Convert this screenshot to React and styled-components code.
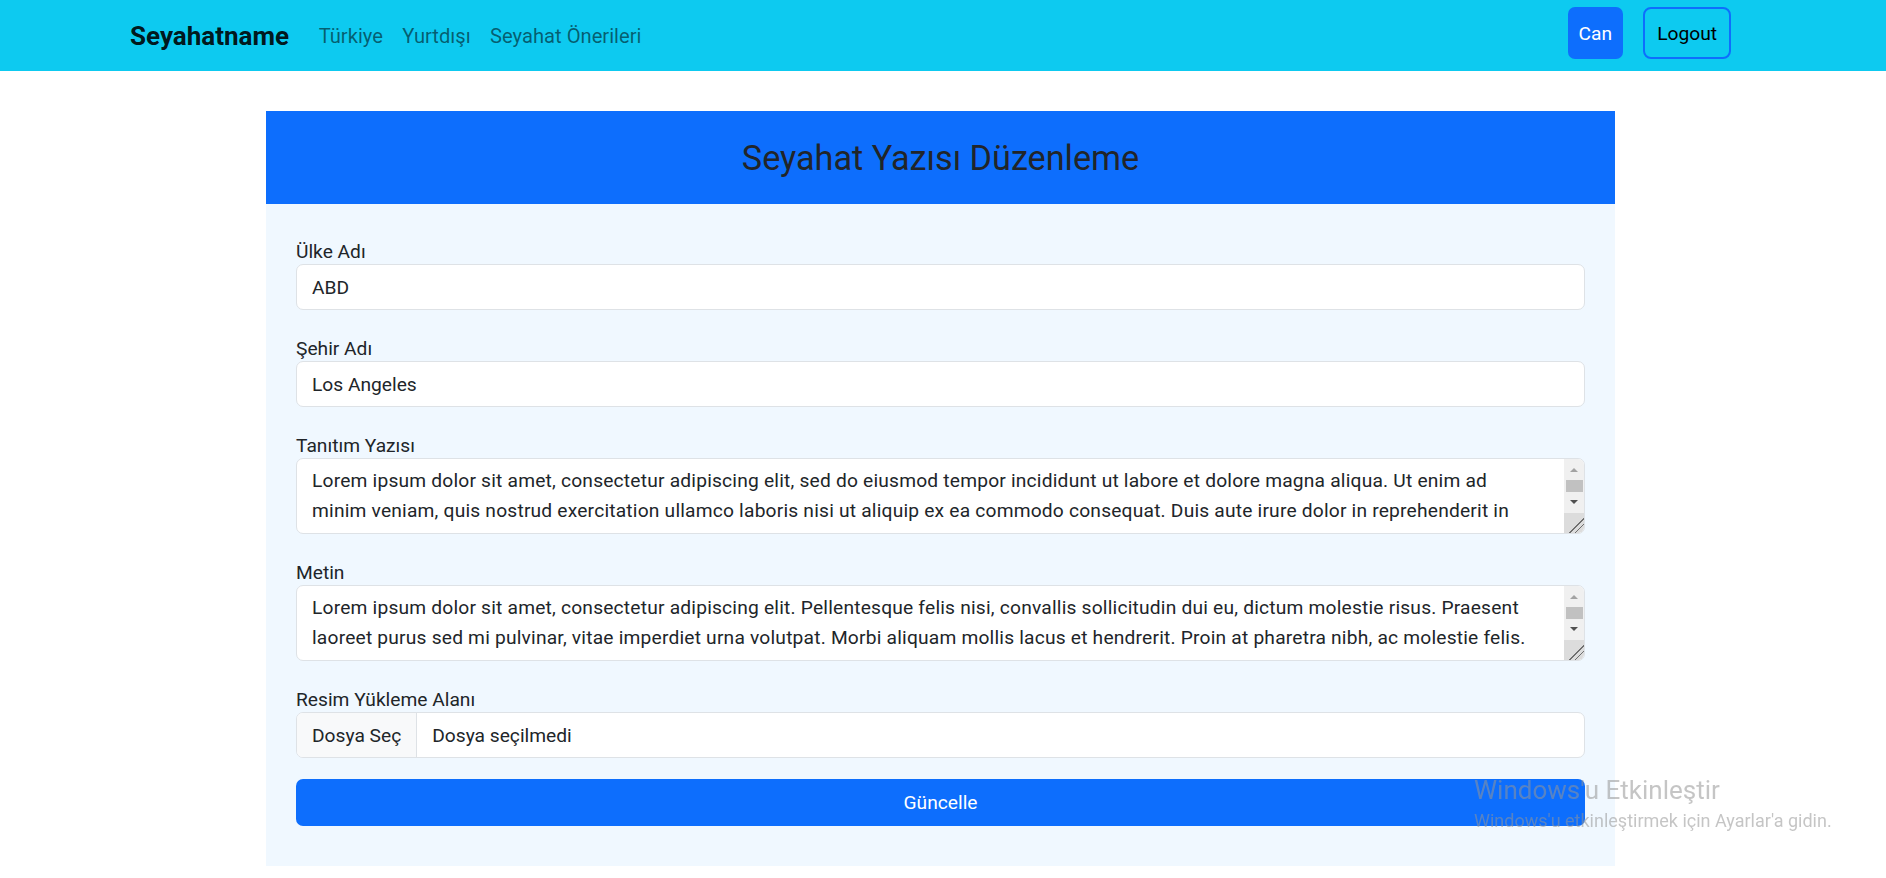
import styled, { createGlobalStyle } from "styled-components";

const GlobalStyle = createGlobalStyle`
  * {
    box-sizing: border-box;
  }
  body {
    margin: 0;
    background: #fff;
    color: #212529;
    font-family: "Segoe UI", Roboto, "Helvetica Neue", Arial, sans-serif;
  }
`;

const introText =
  "Lorem ipsum dolor sit amet, consectetur adipiscing elit, sed do eiusmod tempor incididunt ut labore et dolore magna aliqua. Ut enim ad\n" +
  "minim veniam, quis nostrud exercitation ullamco laboris nisi ut aliquip ex ea commodo consequat. Duis aute irure dolor in reprehenderit in\n" +
  "voluptate velit esse cillum dolore eu fugiat nulla pariatur. Excepteur sint occaecat cupidatat non proident, sunt in culpa qui officia.";

const bodyText =
  "Lorem ipsum dolor sit amet, consectetur adipiscing elit. Pellentesque felis nisi, convallis sollicitudin dui eu, dictum molestie risus. Praesent\n" +
  "laoreet purus sed mi pulvinar, vitae imperdiet urna volutpat. Morbi aliquam mollis lacus et hendrerit. Proin at pharetra nibh, ac molestie felis.\n" +
  "Nullam vel lectus non urna fermentum tincidunt. Donec euismod, nisl eget ultricies aliquam, nunc nisl aliquet nunc, eget aliquam nisl nunc.";

// textarea with the classic windows scrollbar drawn next to it
function ScrollTextArea({ value }) {
  return (
    <TextBox>
      <TextArea defaultValue={value} />
      <Scrollbar>
        <ScrollButton>
          <Arrow $up />
        </ScrollButton>
        <Track>
          <Thumb />
        </Track>
        <ScrollButton>
          <Arrow />
        </ScrollButton>
        <Resizer />
      </Scrollbar>
    </TextBox>
  );
}

function App() {
  return (
    <>
      <GlobalStyle />
      <Navbar>
        <NavLeft>
          <Brand>Seyahatname</Brand>
          <NavLinks>
            <NavLink>Türkiye</NavLink>
            <NavLink>Yurtdışı</NavLink>
            <NavLink>Seyahat Önerileri</NavLink>
          </NavLinks>
        </NavLeft>
        <NavActions>
          <UserButton>Can</UserButton>
          <LogoutButton>Logout</LogoutButton>
        </NavActions>
      </Navbar>

      <Card>
        <CardHeader>
          <Title>Seyahat Yazısı Düzenleme</Title>
        </CardHeader>
        <CardBody>
          <Field>
            <Label>Ülke Adı</Label>
            <Input defaultValue="ABD" />
          </Field>
          <Field>
            <Label>Şehir Adı</Label>
            <Input defaultValue="Los Angeles" />
          </Field>
          <Field>
            <Label>Tanıtım Yazısı</Label>
            <ScrollTextArea value={introText} />
          </Field>
          <Field>
            <Label>Metin</Label>
            <ScrollTextArea value={bodyText} />
          </Field>
          <Field>
            <Label>Resim Yükleme Alanı</Label>
            <FileGroup>
              <FileButton>Dosya Seç</FileButton>
              <FileName>Dosya seçilmedi</FileName>
            </FileGroup>
          </Field>
          <SubmitButton>Güncelle</SubmitButton>
        </CardBody>
      </Card>

      <Watermark>
        <WatermarkTitle>Windows'u Etkinleştir</WatermarkTitle>
        <WatermarkText>Windows'u etkinleştirmek için Ayarlar'a gidin.</WatermarkText>
      </Watermark>
    </>
  );
}

const Navbar = styled.nav`
  display: flex;
  align-items: center;
  justify-content: space-between;
  height: 71px;
  padding: 0 155px 0 130px;
  background-color: #0dcaf0;
`;
const NavLeft = styled.div`
  display: flex;
  align-items: center;
`;
const Brand = styled.a`
  font-size: 26px;
  font-weight: 700;
  color: rgba(0, 0, 0, 0.9);
  margin-right: 20px;
`;
const NavLinks = styled.div`
  display: flex;
`;
const NavLink = styled.a`
  font-size: 20.2px;
  line-height: 30px;
  padding: 0 9.6px;
  color: rgba(0, 0, 0, 0.55);
`;
const NavActions = styled.div`
  display: flex;
  gap: 20px;
  padding-bottom: 5px;
  button {
    height: 52px;
    font-family: inherit;
    font-size: 19.2px;
    cursor: pointer;
  }
`;
const UserButton = styled.button`
  padding: 0 11px;
  border: none;
  border-radius: 7px;
  background-color: #0d6efd;
  color: #fff;
`;
const LogoutButton = styled.button`
  padding: 0 12px;
  border: 2px solid #0d6efd;
  border-radius: 8px;
  background: transparent;
  color: #000;
`;

const Card = styled.section`
  width: 1349px;
  margin: 40px auto 0 266px;
`;
const CardHeader = styled.div`
  display: flex;
  align-items: center;
  justify-content: center;
  height: 93px;
  background-color: #0d6efd;
`;
const Title = styled.h2`
  margin: 0;
  font-size: 34.2px;
  font-weight: 400;
  color: #212529;
`;
const CardBody = styled.div`
  display: flex;
  flex-direction: column;
  padding: 30px 30px 40px;
  background-color: aliceblue;
`;
const Field = styled.div`
  display: flex;
  flex-direction: column;
  margin-bottom: 21px;
  &:last-of-type {
    margin-bottom: 21px;
  }
`;
const Label = styled.label`
  padding-top: 6px;
  font-size: 19.2px;
  line-height: 24px;
  color: #212529;
`;
const Input = styled.input`
  height: 46px;
  padding: 0 15px;
  border: 1px solid #dee2e6;
  border-radius: 7px;
  background: #fff;
  font-family: inherit;
  font-size: 19.2px;
  color: #212529;
  outline: none;
`;
const TextBox = styled.div`
  display: flex;
  height: 76px;
  border: 1px solid #dee2e6;
  border-radius: 7px;
  background: #fff;
  overflow: hidden;
`;
const TextArea = styled.textarea`
  flex: 1;
  padding: 7px 15px;
  border: none;
  background: transparent;
  font-family: inherit;
  font-size: 19.2px;
  line-height: 30px;
  letter-spacing: 0.2px;
  color: #212529;
  white-space: pre;
  overflow: hidden;
  resize: none;
  outline: none;
`;
const Scrollbar = styled.div`
  display: flex;
  flex-direction: column;
  width: 20px;
  background-color: #f0f0f0;
`;
const ScrollButton = styled.div`
  display: flex;
  align-items: center;
  justify-content: center;
  height: 17px;
`;
const Arrow = styled.span`
  width: 0;
  height: 0;
  border-left: 4px solid transparent;
  border-right: 4px solid transparent;
  ${(p) =>
    p.$up
      ? "border-bottom: 4px solid #a3a3a3; margin-top: 4px;"
      : "border-top: 4px solid #505050;"}
`;
const Track = styled.div`
  height: 17px;
  padding: 4px 1px 0 2px;
`;
const Thumb = styled.div`
  height: 12px;
  background-color: #c1c1c1;
`;
const Resizer = styled.div`
  margin-top: auto;
  height: 20px;
  background: linear-gradient(
      135deg,
      transparent 62%,
      #6f6f6f 62% 66%,
      transparent 66% 76%,
      #6f6f6f 76% 80%,
      transparent 80%
    ),
    #dcdcdc;
`;
const FileGroup = styled.div`
  display: flex;
  height: 46px;
  border: 1px solid #dee2e6;
  border-radius: 7px;
  background: #fff;
  overflow: hidden;
  font-size: 19.2px;
  color: #212529;
`;
const FileButton = styled.span`
  display: flex;
  align-items: center;
  padding: 0 15px;
  background-color: #f8f9fa;
  border-right: 1px solid #dee2e6;
`;
const FileName = styled.span`
  display: flex;
  align-items: center;
  padding: 0 15px;
`;
const SubmitButton = styled.button`
  height: 47px;
  border: none;
  border-radius: 7px;
  background-color: #0d6efd;
  color: #fff;
  font-family: inherit;
  font-size: 19.2px;
  cursor: pointer;
`;

const Watermark = styled.div`
  position: fixed;
  left: 1474px;
  top: 775px;
  color: rgba(150, 150, 150, 0.55);
  pointer-events: none;
`;
const WatermarkTitle = styled.div`
  font-size: 26px;
  line-height: 30px;
`;
const WatermarkText = styled.div`
  margin-top: 4px;
  font-size: 18px;
  line-height: 24px;
`;

export default App;
